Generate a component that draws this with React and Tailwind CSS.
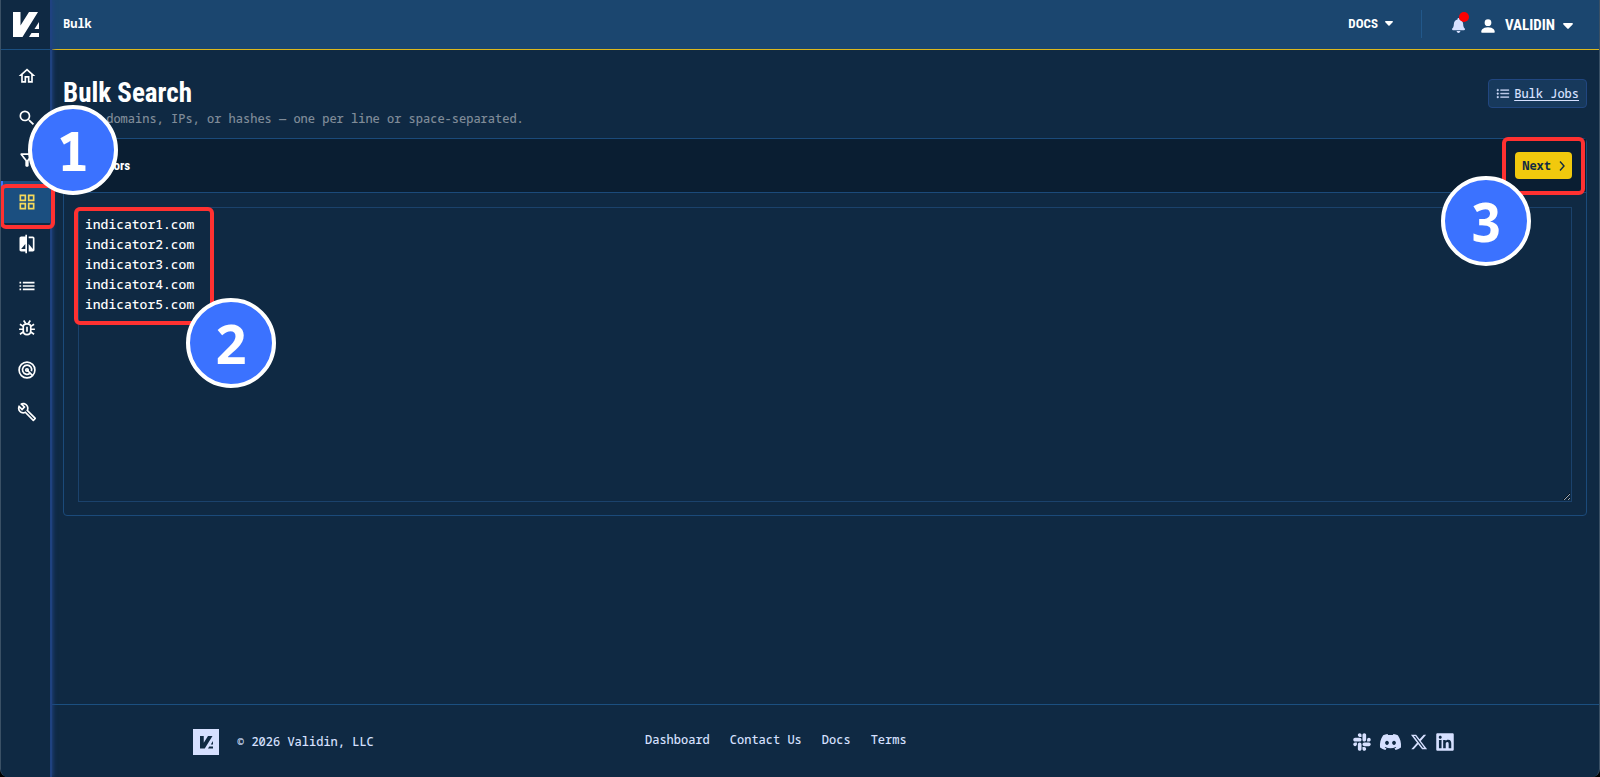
import React, { useState } from 'react';
import { FaBell, FaSlack, FaDiscord, FaLinkedin } from 'react-icons/fa';
import { FaXTwitter } from 'react-icons/fa6';
import { BsPersonFill, BsListUl } from 'react-icons/bs';
import { MdSearch, MdOutlineFilterAlt, MdCompare, MdList, MdOutlineBuild } from 'react-icons/md';

const HomeIcon = (props) => (
  <svg viewBox="0 0 24 24" fill="currentColor" {...props}>
    <path d="M12 5.69L17 10.19V18H15V12H9V18H7V10.19L12 5.69M12 3L2 12H5V20H11V14H13V20H19V12H22L12 3Z" />
  </svg>
);

const GridIcon = (props) => (
  <svg viewBox="0 0 24 24" fill="currentColor" {...props}>
    <path d="M3 11H11V3H3M5 5H9V9H5M13 21H21V13H13M15 15H19V19H15M3 21H11V13H3M5 15H9V19H5M13 3V11H21V3M19 9H15V5H19Z" />
  </svg>
);

const BugIcon = (props) => (
  <svg viewBox="0 0 24 24" fill="none" stroke="currentColor" strokeWidth="2" {...props}>
    <path d="M7.500 10.500C7.500 8 9.500 7 12 7s4.500 1 4.500 3.500V15c0 3-2 5-4.500 5s-4.500-2-4.500-5Z" />
    <path d="M12 10.500v6M8 3l2.500 3.500M16 3l-2.500 3.500M3.500 7.500L7.500 10M20.500 7.500L16.500 10M2.500 13.500h5M21.500 13.500h-5M3.500 19.500L8 16.500M20.500 19.500L16 16.500" />
  </svg>
);

const RadarIcon = (props) => (
  <svg viewBox="0 0 24 24" fill="none" stroke="currentColor" strokeWidth="2" {...props}>
    <circle cx="12" cy="12" r="9.500" />
    <path d="M15.500 16A5.500 5.500 0 1 1 17.300 13.500" />
    <path d="M12 12l6.500 6.500" />
    <circle cx="12" cy="12" r="1.500" />
  </svg>
);

const Caret = (props) => (
  <svg viewBox="0 0 10 6" fill="currentColor" {...props}>
    <path d="M1 0H9C9.900 0 10.300 0.800 9.600 1.500L5.700 5.600C5.300 6 4.700 6 4.300 5.600L0.400 1.500C-0.300 0.800 0.100 0 1 0Z" />
  </svg>
);

const Chevron = (props) => (
  <svg viewBox="0 0 6 10" fill="none" stroke="currentColor" strokeWidth="1.400" {...props}>
    <path d="M1 0.500L5 5L1 9.500" />
  </svg>
);

const Logo = (props) => (
  <svg viewBox="0 0 26 26" fill="currentColor" {...props}>
    <path d="M0 0H7.500V13.500L16 0H25L9.500 25H0Z" />
    <path d="M26 10V17H21.500Z" />
    <path d="M18.500 21H26V25H16Z" />
  </svg>
);

const navItems = [
  { label: 'Home', icon: HomeIcon },
  { label: 'Search', icon: MdSearch },
  { label: 'Filter', icon: MdOutlineFilterAlt },
  { label: 'Bulk', icon: GridIcon, active: true },
  { label: 'Compare', icon: MdCompare },
  { label: 'Lists', icon: MdList },
  { label: 'Threats', icon: BugIcon },
  { label: 'Radar', icon: RadarIcon },
  { label: 'Tools', icon: MdOutlineBuild },
];

const footerLinks = ['Dashboard', 'Contact Us', 'Docs', 'Terms'];

const socials = [
  { label: 'Slack', icon: FaSlack, size: 'w-[18px] h-5' },
  { label: 'Discord', icon: FaDiscord, size: 'w-[23px] h-5' },
  { label: 'X', icon: FaXTwitter, size: 'w-[18px] h-5' },
  { label: 'LinkedIn', icon: FaLinkedin, size: 'w-[18px] h-5' },
];

const condensed = "font-['Roboto_Condensed','Liberation_Sans_Narrow',sans-serif] font-bold";

// Numbered walkthrough marker, placed over the element it explains
const StepBadge = ({ n, className }) => (
  <span
    className={`absolute z-30 w-[90px] h-[90px] rounded-full border-4 border-white bg-[#3b72ff] text-white flex items-center justify-center font-['Noto_Sans_Mono','DejaVu_Sans_Mono',monospace] font-bold text-[54px] leading-none pointer-events-none ${className}`}
  >
    {n}
  </span>
);

const Highlight = ({ className }) => (
  <span className={`absolute z-20 border-4 border-[#ff3131] rounded-md pointer-events-none ${className}`} />
);

const Sidebar = () => (
  <aside className="relative z-10 w-[51px] -mr-px shrink-0 bg-[#0f2943] border-r-2 border-[#1f4280] shadow-[1px_0_4px_#1f4280]">
    <a href="#home" aria-label="Validin" className="h-[50px] flex items-center justify-center border-b border-[#1b4f80] text-white">
      <Logo className="w-[26px] h-[26px]" />
    </a>
    <nav className="pt-[5px]">
      {navItems.map(({ label, icon: Icon, active }) => (
        <div key={label} className="relative">
          <a
            href={`#${label.toLowerCase()}`}
            aria-label={label}
            className={`h-[42px] flex items-center justify-center border-l-2 ${active ? 'border-[#3b72ff] bg-[#1b4f80] text-[#f5d95a]' : 'border-transparent text-white'}`}
          >
            <Icon className="w-5 h-5" />
          </a>
          {active && (
            <>
              <Highlight className="-left-px top-[3px] w-[55px] h-[45px]" />
              <StepBadge n={1} className="left-[27px] bottom-7" />
            </>
          )}
        </div>
      ))}
    </nav>
  </aside>
);

const Topbar = () => (
  <header className="h-[50px] shrink-0 bg-[#1b466f] border-b border-[#dcb81d] pl-3 pr-6.5 pb-0.5 flex items-center justify-between text-white">
    <span className="text-xs font-bold">Bulk</span>
    <div className={`flex items-center ${condensed}`}>
      <button className="flex items-center gap-[7px] text-[13px]">
        DOCS <Caret className="w-2 h-[5px]" />
      </button>
      <div className="w-px h-7 bg-[#22588a] ml-7 mr-[30px]" />
      <div className="flex items-center pt-1">
        <button aria-label="Notifications" className="relative text-[#d6e0ff]">
          <FaBell className="w-[13px] h-[15px]" />
          <span className="absolute -top-1.5 -right-1 w-2.5 h-2.5 rounded-full bg-[#ff0000]" />
        </button>
        <button className="flex items-center gap-2 ml-3.5 text-[15px]">
          <BsPersonFill className="w-[18px] h-[18px]" />
          VALIDIN
          <Caret className="w-2.5 h-1.5" />
        </button>
      </div>
    </div>
  </header>
);

const BulkSearch = () => {
  const [value, setValue] = useState(
    'indicator1.com\nindicator2.com\nindicator3.com\nindicator4.com\nindicator5.com'
  );

  return (
    <main className="flex-1 px-3 pt-[27px]">
      <div className="flex items-start justify-between pb-[11px]">
        <div>
          <h1 className={`text-[27px] leading-8 text-white ${condensed}`}>Bulk Search</h1>
          <p className="mt-0.5 text-xs leading-4 text-[#7f8b98]">Enter domains, IPs, or hashes — one per line or space-separated.</p>
        </div>
        <a
          href="#bulk-jobs"
          className="mt-0.5 h-[29px] px-[7px] flex items-center gap-1 rounded-sm border border-[#214680] bg-[#17395c] text-[#d6e0ff] text-xs"
        >
          <BsListUl className="w-3.5 h-3.5 stroke-[0.500]" />
          <span className="underline underline-offset-2">Bulk Jobs</span>
        </a>
      </div>

      <section className="rounded-sm border border-[#1b4a7a]">
        <div className="h-[54px] px-3.5 flex items-center justify-between bg-[#0a1e32] border-b border-[#1b4a7a]">
          <label htmlFor="indicators" className={`text-[13px] text-white ${condensed}`}>Indicators</label>
          <div className="relative">
            <button className="h-[27px] px-[7px] flex items-center gap-2 rounded-sm bg-[#f1c90d] text-[#102a43] text-xs font-bold">
              Next <Chevron className="w-1.5 h-2.5" />
            </button>
            <Highlight className="-inset-x-[13px] -top-[15px] -bottom-4" />
            <StepBadge n={3} className="right-[41px] top-6" />
          </div>
        </div>
        <div className="relative p-3.5 pb-[13px]">
          <textarea
            id="indicators"
            spellCheck={false}
            value={value}
            onChange={(e) => setValue(e.target.value)}
            className="block w-full h-[295px] px-1.5 py-1.5 border border-[#1b426c] bg-transparent text-white text-[13px] leading-5 resize outline-none"
          />
          <Highlight className="left-2.5 top-3.5 w-[140px] h-[118px]" />
          <StepBadge n={2} className="left-[122px] top-[105px]" />
        </div>
      </section>
    </main>
  );
};

const Footer = () => (
  <footer className="h-[73px] shrink-0 border-t border-[#1b4f80] pl-[142px] pr-[145px] pt-0.5 flex items-center text-[#d6e0ff] text-xs">
    <div className="w-[452px] flex items-center gap-[18px]">
      <span className="w-[26px] h-[26px] bg-[#d6e0ff] text-[#102a43] flex items-center justify-center">
        <Logo className="w-[13px] h-[13px]" />
      </span>
      © 2026 Validin, LLC
    </div>
    <nav className="flex gap-5 pb-1">
      {footerLinks.map((link) => (
        <a key={link} href={`#${link.toLowerCase()}`}>{link}</a>
      ))}
    </nav>
    <div className="ml-auto flex items-center gap-2">
      {socials.map(({ label, icon: Icon, size }) => (
        <a key={label} href={`#${label.toLowerCase()}`} aria-label={label}>
          <Icon className={size} />
        </a>
      ))}
    </div>
  </footer>
);

export default function App() {
  return (
    <div className="min-h-screen bg-black flex font-['Noto_Sans_Mono','DejaVu_Sans_Mono',monospace] font-medium">
      <div className="flex-1 flex overflow-hidden bg-[#0f2943] rounded-b-lg border-x border-[#3a5065]">
        <Sidebar />
        <div className="flex-1 min-w-0 flex flex-col">
          <Topbar />
          <BulkSearch />
          <Footer />
        </div>
      </div>
    </div>
  );
}
